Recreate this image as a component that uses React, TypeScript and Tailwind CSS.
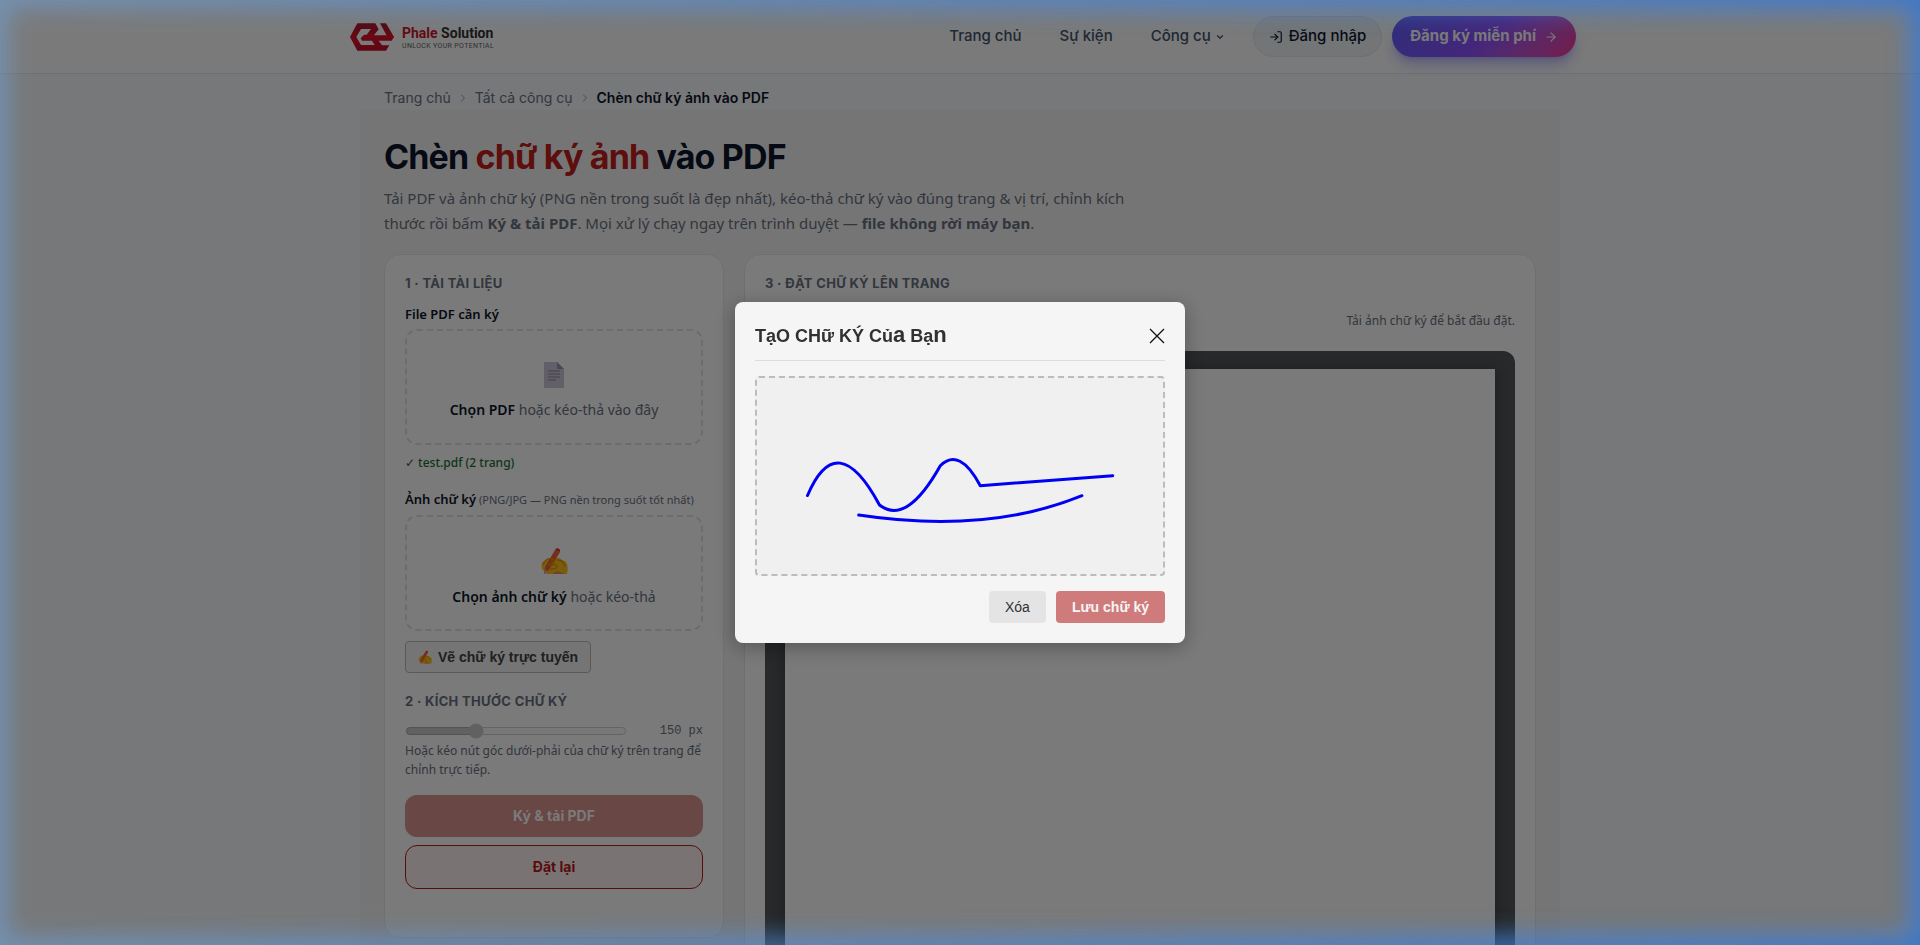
import { useState } from 'react';
import { ArrowRight, ChevronDown, ChevronRight, LogIn } from 'lucide-react';

const navLinks = [
  { label: 'Trang chủ', href: '#home', menu: false },
  { label: 'Sự kiện', href: '#events', menu: false },
  { label: 'Công cụ', href: '#tools', menu: true },
];

function LogoMark() {
  return (
    <svg viewBox="0 0 132 82" className="h-7 w-11" aria-hidden="true">
      <defs>
        <linearGradient id="mark" gradientUnits="userSpaceOnUse" x1="0" y1="0" x2="0" y2="82">
          <stop offset="0" stopColor="#a80f22" />
          <stop offset="0.5" stopColor="#e0132c" />
          <stop offset="1" stopColor="#c40f26" />
        </linearGradient>
      </defs>
      <g fill="url(#mark)">
        <path d="M22 0H76L86 18L72 36H124L132 41L124 52H86L96 66H118L108 82H22L0 41ZM33 17L19 41L33 65H74L66 52H36L32 45L42 34H50L63 17Z" fillRule="evenodd" />
        <path d="M90 0H108L132 41L124 52L112 40Z" />
      </g>
    </svg>
  );
}

function DocumentIcon() {
  return (
    <svg viewBox="0 0 20 26" className="h-[26px] w-5" aria-hidden="true">
      <path d="M0 0H13L20 7V26H0Z" fill="#cfc6dc" />
      <path d="M13 0L20 7H13Z" fill="#9d92b0" />
      <path d="M4 9H16M4 12H16M4 15H16M4 18H12" stroke="#8f86a3" strokeWidth="1" />
    </svg>
  );
}

function WritingHand({ className }: { className: string }) {
  return (
    <svg viewBox="0 0 28 28" className={className} aria-hidden="true">
      <path d="M3 15C1 17 1 21 3 23L7 27H27C28 23 28 18 26 15L19 11L12 10Z" fill="#fcc21b" />
      <path d="M15 3L20 5L9 23L4 27L5 20Z" fill="#f4603c" />
      <path d="M15 3C16 0 21 1 20 5Z" fill="#e0382c" />
      <path d="M4 27L5 22L8 25Z" fill="#f9a58c" />
      <path d="M3 17C5 13 9 11 13 12C15 13 15 16 12 16L8 18M10 19C13 17 17 17 17 20C17 22 14 22 11 22M17 13C21 13 24 16 25 19" fill="none" stroke="#e59600" strokeWidth="1.3" strokeLinecap="round" />
      <path d="M13 27C14 25 17 24 20 25L25 27Z" fill="#f2805e" />
    </svg>
  );
}

function Header() {
  return (
    <header className="border-b border-slate-200 bg-white">
      <div className="mx-auto flex h-[73px] max-w-7xl items-center justify-between px-6">
        <a href="#home" className="flex items-center gap-2 pl-1.5">
          <LogoMark />
          <span className="flex flex-col pt-0.5">
            <span className="font-[Roboto,sans-serif] text-sm leading-4 font-bold text-[#333]">
              <span className="text-[#d0142c]">Phale</span> Solution
            </span>
            <span className="font-[Roboto,sans-serif] text-[7px] leading-[10px] tracking-wider text-[#666]">
              UNLOCK YOUR POTENTIAL
            </span>
          </span>
        </a>

        <div className="flex items-center gap-7 text-[15px]">
          <nav className="flex items-center gap-[38px] font-medium text-slate-600">
            {navLinks.map((link) => (
              <a key={link.label} href={link.href} className="flex items-center gap-1">
                {link.label}
                {link.menu && <ChevronDown className="size-2.5" strokeWidth={3} />}
              </a>
            ))}
          </nav>
          <div className="flex items-center gap-2.5">
            <a
              href="#login"
              className="flex h-[41px] items-center gap-1.5 rounded-full border border-slate-200 bg-slate-100 px-[15px] font-medium text-slate-900"
            >
              <LogIn className="size-3.5" />
              Đăng nhập
            </a>
            <a
              href="#register"
              className="flex h-[41px] items-center gap-2 rounded-full bg-linear-135 from-indigo-500 via-violet-500 to-pink-500 px-[18px] font-bold text-white shadow-lg shadow-indigo-500/40"
            >
              Đăng ký miễn phí
              <ArrowRight className="size-3.5" />
            </a>
          </div>
        </div>
      </div>
    </header>
  );
}

function Breadcrumb() {
  return (
    <nav aria-label="Breadcrumb" className="mx-auto flex h-9 w-full max-w-[1200px] items-center gap-1.5 px-6 pt-3 text-sm text-gray-500">
      <a href="#home">Trang chủ</a>
      <ChevronRight className="size-3 text-slate-400" />
      <a href="#tools">Tất cả công cụ</a>
      <ChevronRight className="size-3 text-slate-400" />
      <span className="font-semibold text-slate-900">Chèn chữ ký ảnh vào PDF</span>
    </nav>
  );
}

function SectionTitle({ children }: { children: string }) {
  return <h2 className="font-[Inter,sans-serif] text-[13px] leading-5 font-bold tracking-wide text-gray-500">{children}</h2>;
}

const dropZone =
  'mt-[5px] flex h-[116px] w-full flex-col items-center justify-center gap-3 rounded-xl border-2 border-dashed border-[#e2e2e2] pt-2 text-sm leading-5 text-gray-500';

function UploadPanel() {
  const [size, setSize] = useState(150);

  return (
    <section className="rounded-2xl border border-[#e8e8e8] bg-white px-5 pt-[18px] pb-12">
      <SectionTitle>1 · TẢI TÀI LIỆU</SectionTitle>
      <p className="mt-[11px] text-[13px] leading-5 font-semibold text-slate-900">File PDF cần ký</p>
      <button type="button" className={dropZone}>
        <DocumentIcon />
        <span>
          <b className="font-semibold text-slate-900">Chọn PDF</b> hoặc kéo-thả vào đây
        </span>
      </button>
      <p className="mt-2 text-xs leading-5 font-medium text-[#1f6f35]">✓ test.pdf (2 trang)</p>

      <p className="mt-4 text-[11px] leading-5 text-gray-500">
        <span className="text-[13px] font-semibold text-slate-900">Ảnh chữ ký</span> (PNG/JPG — PNG nền trong suốt tốt nhất)
      </p>
      <button type="button" className={dropZone}>
        <WritingHand className="size-7" />
        <span>
          <b className="font-semibold text-slate-900">Chọn ảnh chữ ký</b> hoặc kéo-thả
        </span>
      </button>
      <button
        type="button"
        className="mt-2.5 flex h-8 items-center gap-1.5 rounded-sm border border-[#bbb] bg-[#f4f4f4] px-3 font-['Liberation_Sans',sans-serif] text-sm font-bold text-[#444]"
      >
        <WritingHand className="size-3.5" />
        Vẽ chữ ký trực tuyến
      </button>

      <div className="mt-[18px]">
        <SectionTitle>2 · KÍCH THƯỚC CHỮ KÝ</SectionTitle>
      </div>
      <div className="mt-2.5 flex h-5 items-center justify-between">
        <input
          type="range"
          min={40}
          max={400}
          value={size}
          disabled
          aria-label="Kích thước chữ ký"
          onChange={(e) => setSize(Number(e.target.value))}
          className="w-[222px]"
        />
        <span className="font-['Liberation_Mono',monospace] text-xs text-gray-500">{size} px</span>
      </div>
      <p className="text-xs leading-[19px] text-gray-500">
        Hoặc kéo nút góc dưới-phải của chữ ký trên trang để chỉnh trực tiếp.
      </p>

      <button
        type="button"
        className="mt-4 h-[42px] w-full rounded-xl bg-[#da9490] font-[Inter,sans-serif] text-sm font-bold text-white"
      >
        Ký &amp; tải PDF
      </button>
      <button
        type="button"
        className="mt-2 h-11 w-full rounded-xl border border-[#b81c1c] bg-[#fff1f0] font-[Inter,sans-serif] text-sm font-bold text-[#b81c1c]"
      >
        Đặt lại
      </button>
    </section>
  );
}

function PreviewPanel() {
  return (
    <section className="rounded-2xl border border-[#e8e8e8] bg-white px-5 pt-[18px] pb-5">
      <SectionTitle>3 · ĐẶT CHỮ KÝ LÊN TRANG</SectionTitle>
      <p className="mt-[18px] text-right text-xs leading-5 text-gray-500">Tải ảnh chữ ký để bắt đầu đặt.</p>
      <div className="mt-5 rounded-xl bg-[#525659] px-5 py-[18px]">
        <div className="aspect-[210/297] bg-white shadow-[0_2px_12px_rgba(0,0,0,0.3)]" />
      </div>
    </section>
  );
}

function SignatureModal() {
  return (
    <div className="fixed inset-0 flex items-center justify-center bg-black/50">
      <div
        role="dialog"
        aria-labelledby="signature-title"
        className="w-[450px] rounded-lg bg-white p-5 font-['Liberation_Sans',sans-serif] shadow-[0_4px_20px_rgba(0,0,0,0.3)]"
      >
        <div className="flex h-[39px] items-start justify-between border-b border-[#e5e5e5]">
          <h3 id="signature-title" className="text-lg leading-7 font-bold text-[#333]">
            TạO CHữ KÝ Củ<span className="text-[22px] leading-none">a</span> Bạ<span className="text-[22px] leading-none">n</span>
          </h3>
          <button type="button" aria-label="Đóng" className="flex h-7 items-center">
            <svg viewBox="0 0 16 16" className="size-4" aria-hidden="true">
              <path d="M1 1L15 15M15 1L1 15" stroke="#111" strokeWidth="1.3" />
            </svg>
          </button>
        </div>

        <div className="mt-[15px] h-[200px] rounded border-2 border-dashed border-[#c4c4c4] bg-[#fafafa]">
          <svg viewBox="2 2 406 196" className="size-full" aria-hidden="true">
            <g fill="none" stroke="#0000ff" strokeWidth="3" strokeLinecap="round" strokeLinejoin="round">
              <path d="M52.5 119.5Q82 50 124.5 129Q151.5 150 185.3 89.7Q204.5 70.8 225.3 109.7L357.7 99.7" />
              <path d="M103.7 139Q232 158.4 327 119.7" />
            </g>
          </svg>
        </div>

        <div className="mt-[15px] flex justify-end gap-2.5 text-sm">
          <button type="button" className="h-8 rounded bg-[#eee] px-4 text-[#333]">
            Xóa
          </button>
          <button type="button" className="h-8 rounded bg-[#d98181] px-4 font-bold text-white">
            Lưu chữ ký
          </button>
        </div>
      </div>
    </div>
  );
}

// Blue frame round the window, deeper towards the right edge
function EdgeGlow() {
  return (
    <div className="pointer-events-none fixed inset-0 bg-black/4">
      <div className="absolute inset-0 shadow-[inset_0_0_24px_8px_rgba(112,172,236,0.5)]" />
      <div className="absolute inset-0 mask-r-from-0% mask-r-to-100% -scale-x-100 shadow-[inset_0_0_24px_8px_rgba(30,100,210,0.6)]" />
    </div>
  );
}

export default function App() {
  return (
    <div className="h-screen overflow-hidden bg-slate-50 font-[Inter,sans-serif]">
      <Header />
      <Breadcrumb />
      <main className="mx-auto max-w-[1200px] bg-[#f6f5f4] px-6 pt-6 pb-10 font-['Noto_Sans',sans-serif]">
        <h1 className="font-[Inter,sans-serif] text-[34px] leading-[46px] font-bold tracking-tight text-slate-900">
          Chèn <span className="text-[#c0201a]">chữ ký ảnh</span> vào PDF
        </h1>
        <p className="mt-1.5 max-w-[780px] text-[15px] leading-[25px] text-gray-500">
          Tải PDF và ảnh chữ ký (PNG nền trong suốt là đẹp nhất), kéo-thả chữ ký vào đúng trang &amp; vị trí, chỉnh kích thước
          rồi bấm <b className="font-bold">Ký &amp; tải PDF</b>. Mọi xử lý chạy ngay trên trình duyệt —{' '}
          <b className="font-bold">file không rời máy bạn</b>.
        </p>
        <div className="mt-[18px] grid grid-cols-[340px_minmax(0,1fr)] items-start gap-5">
          <UploadPanel />
          <PreviewPanel />
        </div>
      </main>
      <SignatureModal />
      <EdgeGlow />
    </div>
  );
}
